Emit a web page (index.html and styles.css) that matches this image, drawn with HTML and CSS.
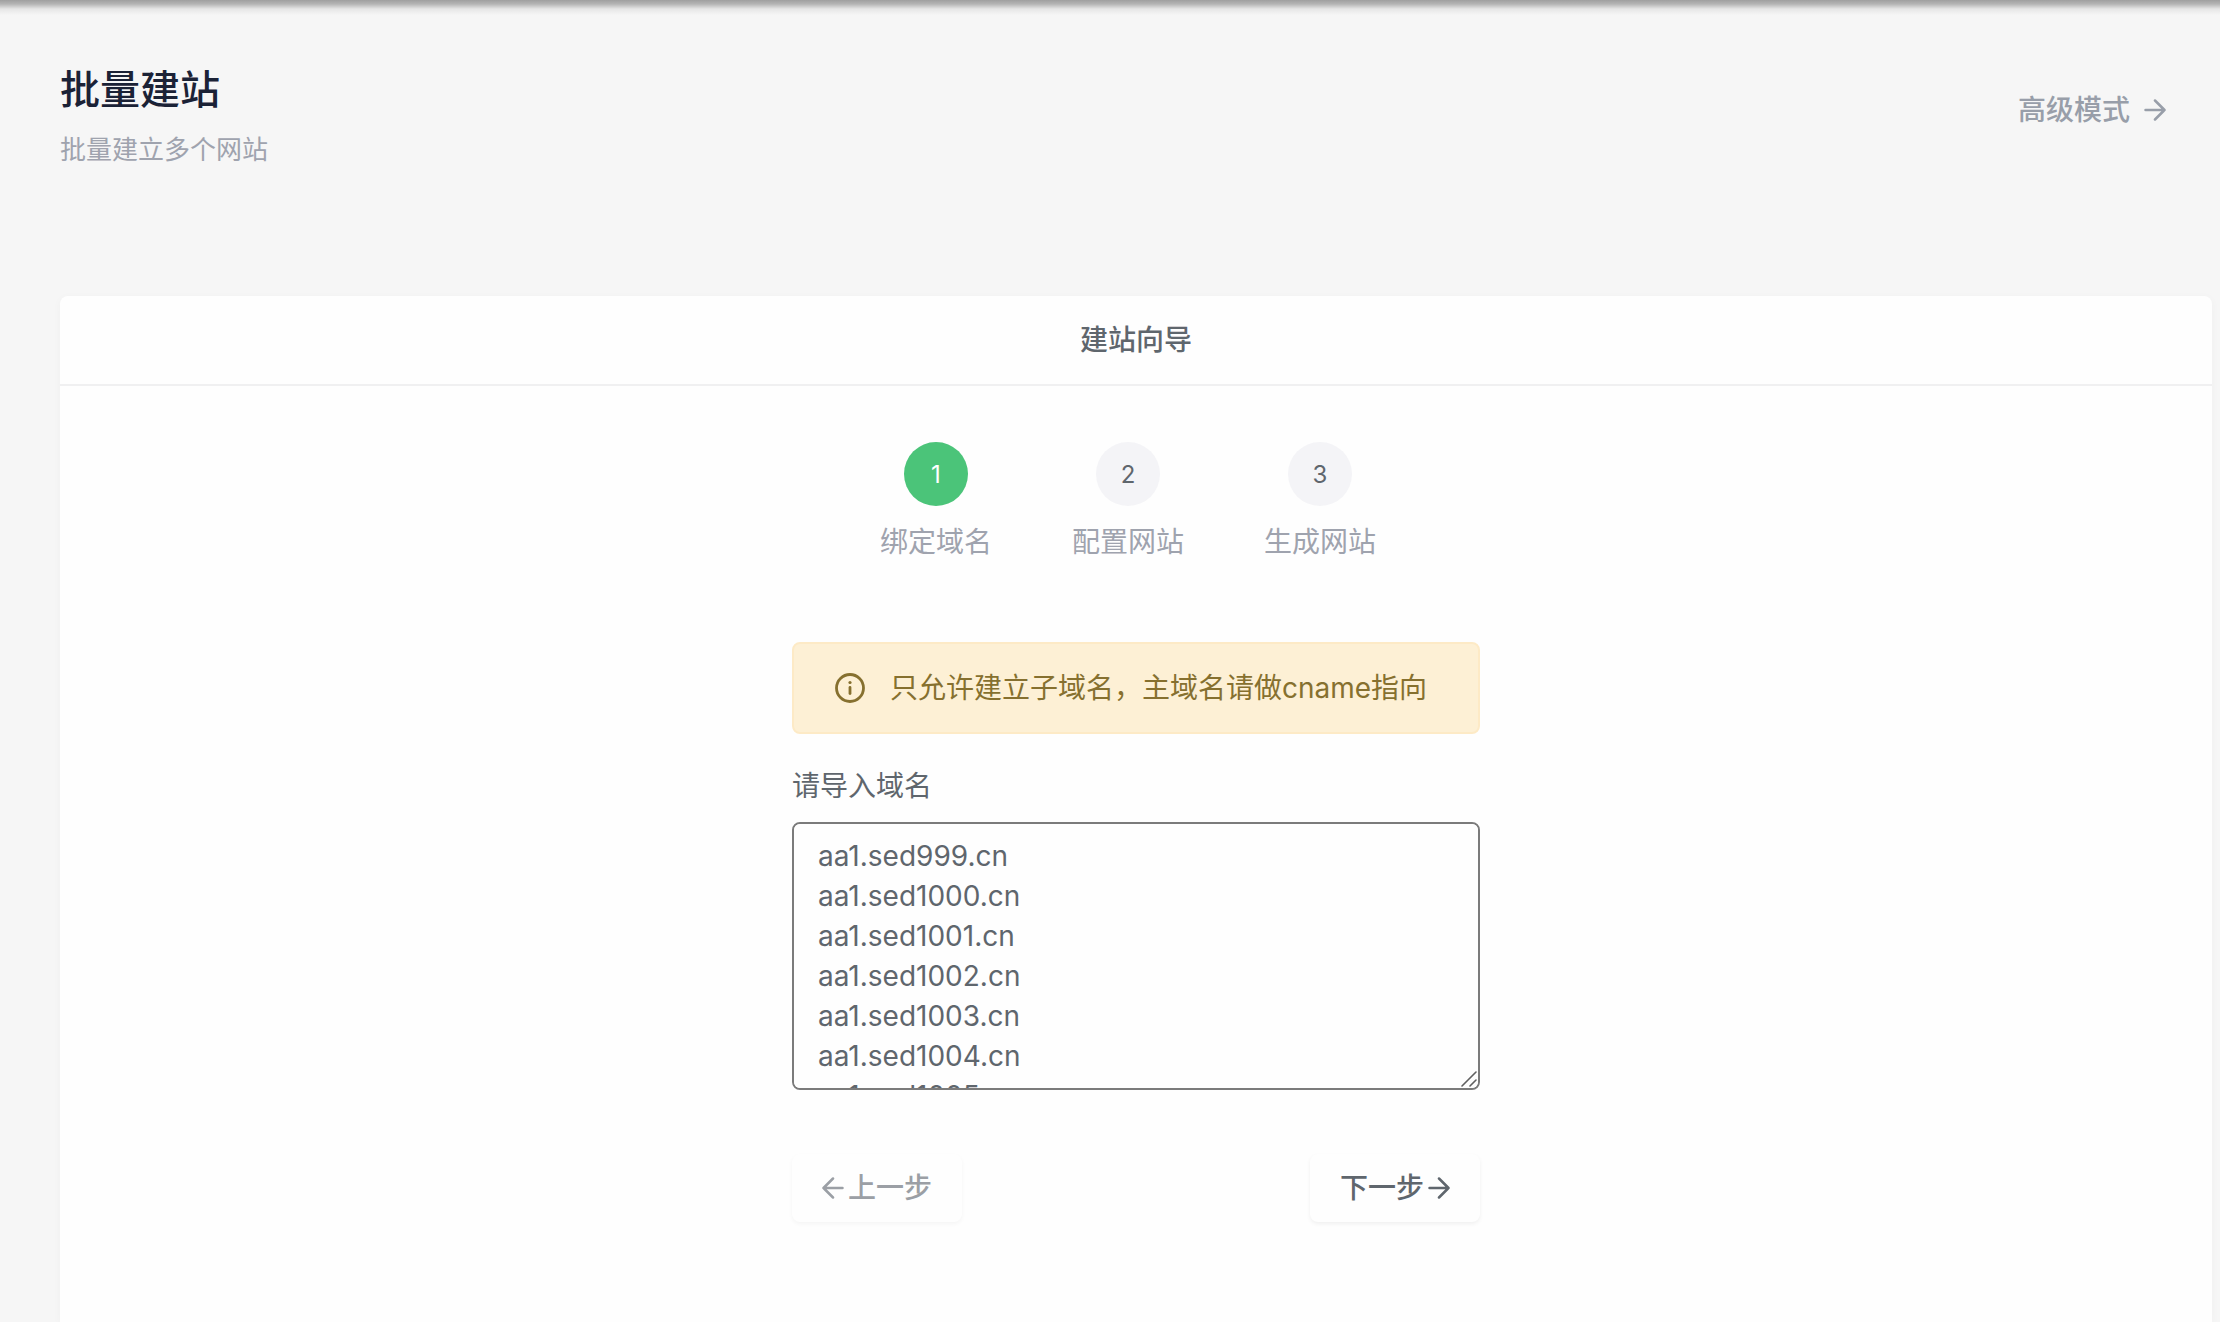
FILE: index.html
```html
<!DOCTYPE html>
<html lang="zh-CN">
<head>
  <meta charset="utf-8">
  <meta name="viewport" content="width=device-width, initial-scale=1">
  <title>批量建站</title>
  <link rel="stylesheet" href="styles.css">
</head>
<body>
  <div class="page">
    <header class="page-header">
      <div>
        <h1 class="page-title">批量建站</h1>
        <p class="page-subtitle">批量建立多个网站</p>
      </div>
      <a class="mode-link" href="#advanced">高级模式
        <svg class="arrow" viewBox="0 0 22 22" aria-hidden="true"><path d="M1.500 11h19M11 1.500l9.500 9.500-9.500 9.500"/></svg>
      </a>
    </header>

    <main class="card">
      <h2 class="card-header">建站向导</h2>
      <form class="wizard">
        <ol class="steps">
          <li class="step"><span class="step-number step-current">1</span><span>绑定域名</span></li>
          <li class="step"><span class="step-number">2</span><span>配置网站</span></li>
          <li class="step"><span class="step-number">3</span><span>生成网站</span></li>
        </ol>

        <div class="notice" role="note">
          <svg class="notice-icon" viewBox="0 0 32 32" aria-hidden="true"><circle cx="16" cy="16" r="13.500"/><path d="M16 15.500v6"/><circle class="dot" cx="16" cy="10.500" r="1.600"/></svg>
          <span>只允许建立子域名，主域名请做cname指向</span>
        </div>

        <label class="field-label" for="domains">请导入域名</label>
        <div class="field">
          <textarea class="domains" id="domains" spellcheck="false">aa1.sed999.cn
aa1.sed1000.cn
aa1.sed1001.cn
aa1.sed1002.cn
aa1.sed1003.cn
aa1.sed1004.cn
aa1.sed1005.cn</textarea>
          <svg class="grip" viewBox="0 0 16 16" aria-hidden="true"><path d="M1 15L15 1M9 15l6-6"/></svg>
        </div>

        <div class="actions">
          <button class="button" type="button" disabled><svg class="arrow" viewBox="0 0 22 22" aria-hidden="true"><path d="M20.500 11H1.500M11 1.500L1.500 11l9.500 9.500"/></svg>上一步</button>
          <button class="button" type="button">下一步<svg class="arrow" viewBox="0 0 22 22" aria-hidden="true"><path d="M1.500 11h19M11 1.500l9.500 9.500-9.500 9.500"/></svg></button>
        </div>
      </form>
    </main>
  </div>
</body>
</html>
```

FILE: styles.css
```css
* {
  box-sizing: border-box;
}

body {
  margin: 0;
  background: #f6f6f6;
  color: #5f666d;
  font-family: Inter, "Noto Sans CJK SC", sans-serif;
  font-size: 28px;
  line-height: 40px;
}

.page {
  display: flex;
  flex-direction: column;
  min-height: 100vh;
  padding: 62px 8px 0 60px;
  background: linear-gradient(#9f9f9f, #b4b4b4 4px, #e6e6e6 9px, #f6f6f6 15px);
}

.page-header {
  display: flex;
  align-items: center;
  justify-content: space-between;
  padding-right: 46px;
  margin-bottom: 126px;
}

.page-title {
  margin: 0;
  color: #1b2236;
  font-size: 40px;
  font-weight: 500;
  line-height: 56px;
}

.page-subtitle {
  margin: 12px 0 0;
  color: #9fa3ae;
  font-size: 26px;
}

.mode-link {
  display: flex;
  align-items: center;
  gap: 14px;
  padding-bottom: 12px;
  color: #989ea9;
  font-weight: 500;
  text-decoration: none;
}

.arrow {
  width: 22px;
  height: 22px;
  fill: none;
  stroke: currentColor;
  stroke-width: 2.5;
  stroke-linecap: round;
  stroke-linejoin: round;
}

.card {
  flex: 1;
  background: #fefefe;
  border-radius: 8px 8px 0 0;
  box-shadow: 0 2px 10px rgba(0, 0, 0, 0.03);
}

.card-header {
  margin: 0;
  padding: 24px;
  border-bottom: 2px solid #f0f0f1;
  font-size: 28px;
  font-weight: 500;
  text-align: center;
}

.wizard {
  display: flex;
  flex-direction: column;
  max-width: 688px;
  margin: 0 auto;
  padding: 56px 0 96px;
}

.steps {
  display: flex;
  justify-content: center;
  gap: 80px;
  margin: 0 0 80px;
  padding: 0 16px 0 0;
  color: #9fa3ae;
  list-style: none;
}

.step {
  display: flex;
  flex-direction: column;
  align-items: center;
  gap: 16px;
}

.step-number {
  width: 64px;
  height: 64px;
  border-radius: 50%;
  background: #f4f4f7;
  color: #5f666d;
  font-size: 24px;
  line-height: 66px;
  text-align: center;
}

.step-current {
  background: #4bc479;
  color: #fff;
}

.notice {
  display: flex;
  align-items: center;
  gap: 24px;
  padding: 24px 40px;
  border: 2px solid #fdeac6;
  border-radius: 8px;
  background: #fdf0d5;
  color: #86702f;
}

.notice-icon {
  width: 32px;
  height: 32px;
  fill: none;
  stroke: currentColor;
  stroke-width: 2.8;
  stroke-linecap: round;
}

.notice-icon .dot {
  fill: currentColor;
  stroke: none;
}

.field-label {
  margin: 32px 0 16px;
}

.field {
  position: relative;
  display: flex;
}

.domains {
  width: 100%;
  height: 268px;
  padding: 12px 24px;
  border: 2px solid #7b7b7b;
  border-radius: 8px;
  outline: none;
  background: #fefefe;
  color: inherit;
  font: inherit;
  resize: none;
  scrollbar-width: none;
}

.grip {
  position: absolute;
  right: 3px;
  bottom: 3px;
  width: 16px;
  height: 16px;
  fill: none;
  stroke: #606060;
  stroke-width: 1.6;
  stroke-linecap: round;
  pointer-events: none;
}

.actions {
  display: flex;
  justify-content: space-between;
  margin-top: 64px;
}

.button {
  display: flex;
  align-items: center;
  gap: 4px;
  padding: 14px 30px;
  border: 0;
  border-radius: 8px;
  background: #fefefe;
  box-shadow: 0 2px 4px rgba(0, 0, 0, 0.06);
  color: #5f666d;
  font: inherit;
  font-weight: 500;
}

.button:disabled {
  color: #9b9fa5;
  box-shadow: 0 2px 4px rgba(0, 0, 0, 0.04);
}
```
